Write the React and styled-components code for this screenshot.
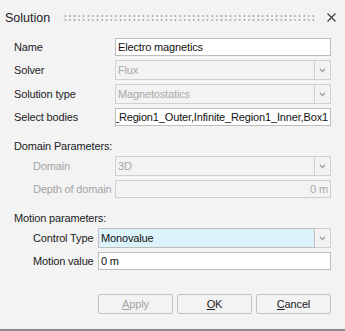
import React from 'react'
import styled, { createGlobalStyle } from 'styled-components'

const Global = createGlobalStyle`
    body {
        margin: 0;
        background: #f3f3f3;
        font-family: "Liberation Sans", Arial, sans-serif;
    }
`

const Dialog = styled.div`
    width: 345px;
    height: 331px;
    box-sizing: border-box;
    background: #f3f3f3;
    border-bottom: 2px solid #8c8c8c;
    display: flex;
    flex-direction: column;
    color: #1b1b24;
    font-size: 11px;
    letter-spacing: -0.15px;
`

const Header = styled.div`
    height: 36px;
    display: flex;
    align-items: center;
    padding: 0 9px 0 5px;
`

const Title = styled.div`
    font-size: 12.5px;
    letter-spacing: 0;
    color: #1b1b24;
    width: 58px;
`

const Gripper = styled.div`
    flex: 1;
    height: 8px;
    margin-right: 12px;
    background-image: radial-gradient(circle, #9c9c9c 0.75px, transparent 1.1px);
    background-size: 4.6px 4px;
    background-position: 0 0;
`

const Close = styled.svg`
    width: 9px;
    height: 9px;
    margin-top: -1px;
`

const Form = styled.div`
    display: flex;
    flex-direction: column;
    padding: 2px 14px 0 14px;
`

const Grid = styled.div`
    display: grid;
    grid-template-columns: ${p => p.$label}px 1fr;
    row-gap: 4px;
    align-items: center;
    padding-left: ${p => p.$indent || 0}px;
`

const Label = styled.div`
    color: ${p => p.$disabled ? '#a3a3a3' : '#1b1b24'};
    white-space: nowrap;
`

const SectionTitle = styled.div`
    margin: 13px 0 3px;
    line-height: 14px;
`

const Field = styled.div`
    box-sizing: border-box;
    height: ${p => p.$h || 18}px;
    border: 1px solid ${p => p.$disabled ? '#cfcfcf' : '#bdbdbd'};
    background: ${p => p.$disabled ? '#f3f3f3' : p.$bg || '#fff'};
    color: ${p => p.$disabled ? '#a8a8a8' : '#111'};
    display: flex;
    align-items: center;
    justify-content: ${p => p.$end ? 'flex-end' : 'flex-start'};
    padding: 0 2px 0 2px;
    overflow: hidden;
    white-space: nowrap;
    flex: 1;
`

const Combo = styled.div`
    display: flex;
    height: 20px;
`

const DropBtn = styled.div`
    box-sizing: border-box;
    width: 16px;
    height: 20px;
    border: 1px solid #cfcfcf;
    border-left: none;
    display: flex;
    align-items: center;
    justify-content: center;
    background: #f3f3f3;
`

const Footer = styled.div`
    display: flex;
    justify-content: flex-end;
    gap: 4px;
    padding: 24px 14px 0 0;
`

const Button = styled.div`
    box-sizing: border-box;
    width: 75px;
    height: 20px;
    border: 1px solid #c2c2c2;
    border-radius: 2px;
    display: flex;
    align-items: center;
    justify-content: center;
    color: ${p => p.$disabled ? '#a3a3a3' : '#1b1b24'};
    u { text-decoration-thickness: 1px; }
`

const Chevron = () => (
    <svg width="7" height="5" viewBox="0 0 7 5">
        <path d="M1 1 L3.5 3.5 L6 1" fill="none" stroke="#a8a8a8" strokeWidth="1.6" />
    </svg>
)

const ComboBox = ({ value, disabled, bg }) => (
    <Combo>
        <Field $h={20} $disabled={disabled} $bg={bg}>{value}</Field>
        <DropBtn><Chevron /></DropBtn>
    </Combo>
)

export default function App() {
    return <>
        <Global />
        <Dialog>
            <Header>
                <Title>Solution</Title>
                <Gripper />
                <Close viewBox="0 0 9 9">
                    <path d="M0.5 0.5 L8.5 8.5 M8.5 0.5 L0.5 8.5" stroke="#3a3a3a" strokeWidth="1.1" />
                </Close>
            </Header>
            <Form>
                <Grid $label={101}>
                    <Label>Name</Label>
                    <Field>Electro magnetics</Field>
                    <Label>Solver</Label>
                    <ComboBox value="Flux" disabled />
                    <Label>Solution type</Label>
                    <ComboBox value="Magnetostatics" disabled />
                    <Label>Select bodies</Label>
                    <Field $end>Infinite_Region1_Outer,Infinite_Region1_Inner,Box1</Field>
                </Grid>

                <SectionTitle>Domain Parameters:</SectionTitle>
                <Grid $label={82} $indent={19}>
                    <Label $disabled>Domain</Label>
                    <ComboBox value="3D" disabled />
                    <Label $disabled>Depth of domain</Label>
                    <Field $disabled $end>0 m</Field>
                </Grid>

                <SectionTitle>Motion parameters:</SectionTitle>
                <Grid $label={65} $indent={19}>
                    <Label>Control Type</Label>
                    <ComboBox value="Monovalue" bg="#dcf3fc" />
                    <Label>Motion value</Label>
                    <Field>0 m</Field>
                </Grid>
            </Form>
            <Footer>
                <Button $disabled><span><u>A</u>pply</span></Button>
                <Button><span><u>O</u>K</span></Button>
                <Button><span><u>C</u>ancel</span></Button>
            </Footer>
        </Dialog>
    </>
}
